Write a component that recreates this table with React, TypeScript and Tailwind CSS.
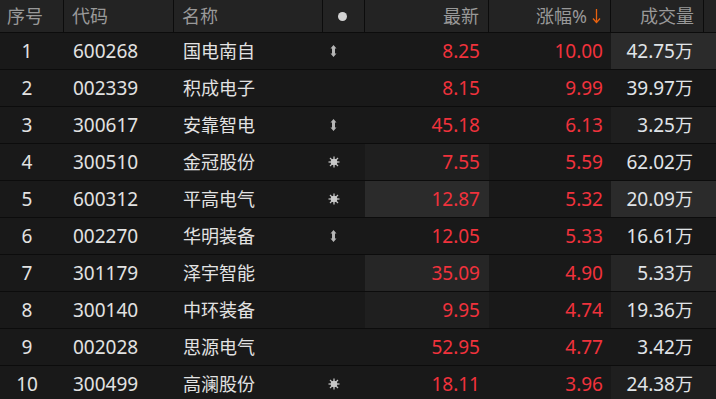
const FONT = { fontFamily: '"Noto Sans", "Noto Sans CJK SC", "Liberation Sans", sans-serif' };

type Row = {
  no: number;
  code: string;
  name: string;
  icon?: "arrow" | "star";
  price: string;
  pct: string;
  vol: string;
  priceBg?: string;
  volBg?: string;
};

const rows: Row[] = [
  { no: 1, code: "600268", name: "国电南自", icon: "arrow", price: "8.25", pct: "10.00", vol: "42.75", volBg: "bg-[#2b2b2b]" },
  { no: 2, code: "002339", name: "积成电子", price: "8.15", pct: "9.99", vol: "39.97" },
  { no: 3, code: "300617", name: "安靠智电", icon: "arrow", price: "45.18", pct: "6.13", vol: "3.25", volBg: "bg-[#1f1f1f]" },
  { no: 4, code: "300510", name: "金冠股份", icon: "star", price: "7.55", pct: "5.59", vol: "62.02", priceBg: "bg-[#1f1f1f]" },
  { no: 5, code: "600312", name: "平高电气", icon: "star", price: "12.87", pct: "5.32", vol: "20.09", priceBg: "bg-[#2b2b2b]", volBg: "bg-[#2b2b2b]" },
  { no: 6, code: "002270", name: "华明装备", icon: "arrow", price: "12.05", pct: "5.33", vol: "16.61" },
  { no: 7, code: "301179", name: "泽宇智能", price: "35.09", pct: "4.90", vol: "5.33", priceBg: "bg-[#262626]", volBg: "bg-[#262626]" },
  { no: 8, code: "300140", name: "中环装备", price: "9.95", pct: "4.74", vol: "19.36", priceBg: "bg-[#1f1f1f]", volBg: "bg-[#1f1f1f]" },
  { no: 9, code: "002028", name: "思源电气", price: "52.95", pct: "4.77", vol: "3.42" },
  { no: 10, code: "300499", name: "高澜股份", icon: "star", price: "18.11", pct: "3.96", vol: "24.38", volBg: "bg-[#1f1f1f]" },
];

function ArrowIcon() {
  return (
    <svg width="7" height="12" viewBox="0 0 7 12">
      <polygon points="3.5,0 6.5,3.5 5,3.5 5,8.5 6.5,8.5 3.5,12 0.5,8.5 2,8.5 2,3.5 0.5,3.5" fill="#b5b5b5" />
    </svg>
  );
}

function StarIcon() {
  return (
    <svg width="12" height="12" viewBox="0 0 12 12">
      <g stroke="#c0c0c0" strokeWidth="1.3">
        <line x1="6" y1="0.5" x2="6" y2="11.5" />
        <line x1="0.5" y1="6" x2="11.5" y2="6" />
        <line x1="2" y1="2" x2="10" y2="10" />
        <line x1="10" y1="2" x2="2" y2="10" />
      </g>
      <circle cx="6" cy="6" r="3.3" fill="#c8c8c8" />
    </svg>
  );
}

function SortArrow() {
  return (
    <svg width="9" height="16" viewBox="0 0 9 16">
      <g stroke="#e8620f" strokeWidth="1.3" fill="none">
        <line x1="4.5" y1="1" x2="4.5" y2="14.5" />
        <polyline points="1,10.5 4.5,14.5 8,10.5" />
      </g>
    </svg>
  );
}

export default function App() {
  return (
    <div className="w-[716px] h-[399px] overflow-hidden bg-[#191919] text-[18px] leading-none" style={FONT}>
      <div className="grid grid-cols-[64px_110px_149px_42px_124px_122px_93px_12px] h-[33px] bg-[#232323] border-b border-[#0c0c0c] text-[#999999]">
        <div className="flex items-center pl-[7px] border-r border-[#0c0c0c]">序号</div>
        <div className="flex items-center pl-[8px] border-r border-[#0c0c0c]">代码</div>
        <div className="flex items-center pl-[8px] border-r border-[#0c0c0c]">名称</div>
        <div className="flex items-center justify-center pr-[2px] border-r border-[#0c0c0c]">
          <div className="w-[9px] h-[9px] rounded-full bg-[#d2d2d2]" />
        </div>
        <div className="flex items-center justify-end pr-[9px] border-r border-[#0c0c0c]">最新</div>
        <div className="flex items-center justify-end gap-[5px] pr-[9px] border-r border-[#0c0c0c]">
          <span>涨幅%</span>
          <SortArrow />
        </div>
        <div className="flex items-center justify-end pr-[9px] border-r border-[#0c0c0c]">成交量</div>
        <div />
      </div>

      {rows.map((r) => (
        <div
          key={r.no}
          className="grid grid-cols-[64px_110px_149px_42px_124px_122px_105px] h-[37px] border-b border-[#0c0c0c]"
        >
          <div className="flex items-center justify-center pr-[10px] text-[19px] text-[#e2e2e2]">{r.no}</div>
          <div className="flex items-center pl-[9px] text-[19px] text-[#e2e2e2]">{r.code}</div>
          <div className="flex items-center pl-[9px] text-[#e2e2e2]">{r.name}</div>
          <div className="flex items-center">
            <div className="w-[21px] flex justify-center">
              {r.icon === "arrow" && <ArrowIcon />}
              {r.icon === "star" && <StarIcon />}
            </div>
          </div>
          <div className={`flex items-center justify-end pr-[9px] text-[19px] text-[#f0323c] ${r.priceBg ?? ""}`}>{r.price}</div>
          <div className="flex items-center justify-end pr-[8px] text-[19px] text-[#f0323c]">{r.pct}</div>
          <div className={`flex items-center justify-end pr-[23px] text-[#e0e4e8] ${r.volBg ?? ""}`}>
            <span className="text-[19px]">{r.vol}</span>
            <span>万</span>
          </div>
        </div>
      ))}
    </div>
  );
}
